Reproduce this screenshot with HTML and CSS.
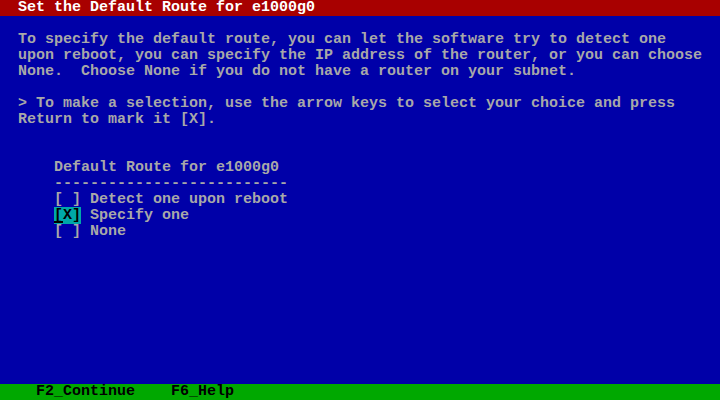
FILE: index.html
```html
<!DOCTYPE html>
<html>
<head>
<meta charset="utf-8">
<link rel="stylesheet" href="styles.css">
</head>
<body>
<div class="screen">
  <div class="title">Set the Default Route for e1000g0</div>
  <main class="body">
    <p class="para">To specify the default route, you can let the software try to detect one
upon reboot, you can specify the IP address of the router, or you can choose
None.  Choose None if you do not have a router on your subnet.</p>
    <p class="para">&gt; To make a selection, use the arrow keys to select your choice and press
Return to mark it [X].</p>
    <section class="menu">
      <div class="line">Default Route for e1000g0</div>
      <div class="line">--------------------------</div>
      <div class="line"><span class="box">[ ]</span> Detect one upon reboot</div>
      <div class="line"><span class="box sel"><span class="cur">[</span>X]</span> Specify one</div>
      <div class="line"><span class="box">[ ]</span> None</div>
    </section>
  </main>
  <footer class="footer">F2_Continue    F6_Help</footer>
</div>
</body>
</html>
```
FILE: styles.css
```css
html, body {
  margin: 0;
  padding: 0;
  background: #0000a8;
}
.screen {
  width: 720px;
  height: 400px;
  display: flex;
  flex-direction: column;
  background: #0000a8;
  color: #a8a8a8;
  font-family: "Liberation Mono", "DejaVu Sans Mono", monospace;
  font-weight: bold;
  font-size: 15px;
  line-height: 16px;
  overflow: hidden;
}
.title {
  height: 16px;
  background: #a80000;
  color: #ffffff;
  padding-left: 18px;
  white-space: pre;
}
.body {
  flex: 1;
  padding: 16px 0 0 18px;
}
.para {
  margin: 0 0 16px 0;
  white-space: pre;
}
.menu {
  margin-top: 32px;
  padding-left: 36px;
}
.line {
  height: 16px;
  white-space: pre;
}
.box.sel {
  background: #00a8a8;
  color: #000000;
}
.cur {
  display: inline-block;
  position: relative;
}
.cur::after {
  content: "";
  position: absolute;
  left: 0;
  width: 9px;
  bottom: 1px;
  height: 2px;
  background: #000000;
}
.footer {
  height: 16px;
  background: #00a800;
  color: #000000;
  padding-left: 36px;
  white-space: pre;
}
```
